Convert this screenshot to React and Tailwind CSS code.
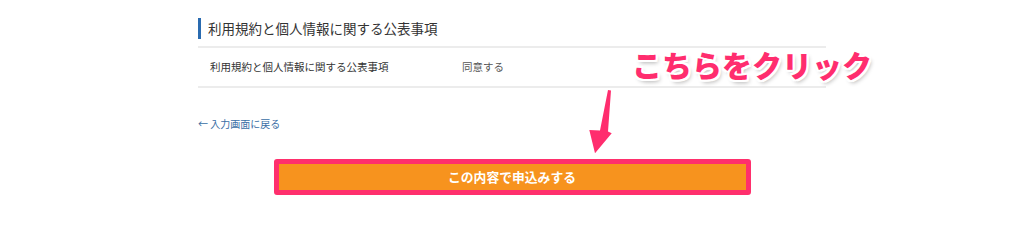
import React from "react";

const font = "font-['Noto_Sans_CJK_JP','Noto_Sans',sans-serif]";

const Arrow = () => (
  <svg
    className="absolute left-[580px] top-[85px]"
    width="40"
    height="75"
    viewBox="0 0 40 75"
  >
    <polygon
      points="28,5 31,5.5 28,46.5 31.7,48.3 15,68.3 9.3,45 20,45.5"
      fill="#ff2d6e"
    />
  </svg>
);

const App = () => {
  return (
    <div className={`relative w-[1024px] h-[242px] bg-white overflow-hidden ${font}`}>
      <div className="mx-auto w-[628px] pt-[18px]">
        <div className="flex items-center h-[21px] border-l-[3px] border-[#2a6bb0] pl-[7px]">
          <h2 className="text-[13.5px] leading-none text-[#333]">
            利用規約と個人情報に関する公表事項
          </h2>
        </div>
        <div className="mt-[7px] border-t-2 border-b-2 border-[#ececec] flex items-center h-[42px] text-[10.5px]">
          <span className="pl-[12px] w-[264px] text-[#333]">
            利用規約と個人情報に関する公表事項
          </span>
          <span className="text-[#555]">同意する</span>
        </div>
        <a className="block mt-[31px] text-[10px] leading-none text-[#3a6ea5]">
          ← 入力画面に戻る
        </a>
      </div>
      <div className="mx-auto mt-[30px] w-[477px] h-[36px] rounded-[3px] border-[5px] border-[#ff2f6d] bg-[#f7931e] flex items-center justify-center">
        <span className="text-white font-bold text-[12.8px]">この内容で申込みする</span>
      </div>
      <div className="absolute left-[632px] top-[49px] text-[30px] leading-none font-black text-[#ff2d6e] tracking-[0px] [text-shadow:2px_0_#fff,-2px_0_#fff,0_2px_#fff,0_-2px_#fff,2px_2px_#fff,-2px_-2px_#fff,2px_-2px_#fff,-2px_2px_#fff,2px_3px_4px_rgba(0,0,0,0.3)]">
        こちらをクリック
      </div>
      <Arrow />
    </div>
  );
};

export default App;
